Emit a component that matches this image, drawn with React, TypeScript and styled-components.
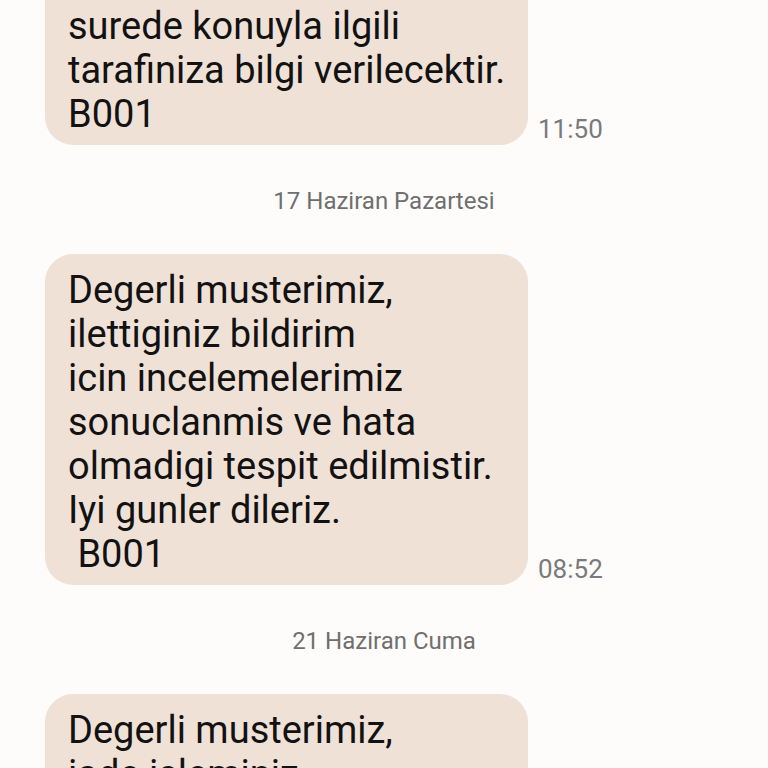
import React from 'react';
import styled, { createGlobalStyle } from 'styled-components';

interface Message {
    text: string,
    time?: string
}

interface Group {
    date?: string,
    messages: Message[]
}

const groups: Group[] = [
    {
        messages: [
            {
                text: 'en kisa\nsurede konuyla ilgili\ntarafiniza bilgi verilecektir.\nB001',
                time: '11:50'
            }
        ]
    },
    {
        date: '17 Haziran Pazartesi',
        messages: [
            {
                text: 'Degerli musterimiz,\nilettiginiz bildirim\nicin incelemelerimiz\nsonuclanmis ve hata\nolmadigi tespit edilmistir.\nIyi gunler dileriz.\n B001',
                time: '08:52'
            }
        ]
    },
    {
        date: '21 Haziran Cuma',
        messages: [
            {
                text: 'Degerli musterimiz,\niade isleminiz\ngerceklestirilmistir.'
            }
        ]
    }
];

function App() {
    return (
        <>
            <GlobalStyle/>
            <Screen>
                <Thread>
                    {groups.map((group, gi) => (
                        <React.Fragment key={gi}>
                            {group.date && <DateLabel>{group.date}</DateLabel>}
                            {group.messages.map((m, mi) => (
                                <Row key={mi}>
                                    <Bubble>{m.text}</Bubble>
                                    {m.time && <Time>{m.time}</Time>}
                                </Row>
                            ))}
                        </React.Fragment>
                    ))}
                </Thread>
            </Screen>
        </>
    );
}

const GlobalStyle = createGlobalStyle`
    html, body{
        margin:0;
        padding:0;
        background:#fdfcfa;
    }
    body{
        font-family:Roboto, "Noto Sans", sans-serif;
        -webkit-font-smoothing:antialiased;
    }
`;

const Screen = styled.div`
    width:768px;
    height:768px;
    overflow:hidden;
    background:#fdfcfa;
`;

const Thread = styled.div`
    display:flex;
    flex-direction:column;
    margin-top:-54px;
`;

const Row = styled.div`
    display:flex;
    align-items:flex-end;
    padding-left:45px;
`;

const Bubble = styled.div`
    box-sizing:border-box;
    width:483px;
    padding:14px 20px 9px 23px;
    background:#f0e1d7;
    border-radius:28px;
    color:#121212;
    font-size:38px;
    line-height:44px;
    white-space:pre-wrap;
`;

const Time = styled.span`
    margin:0 0 1px 10px;
    color:#7a7a7a;
    font-size:26px;
    line-height:30px;
`;

const DateLabel = styled.div`
    margin:41px 0 38px;
    text-align:center;
    color:#6f6f6f;
    font-size:24px;
    line-height:30px;
`;

export default App;
